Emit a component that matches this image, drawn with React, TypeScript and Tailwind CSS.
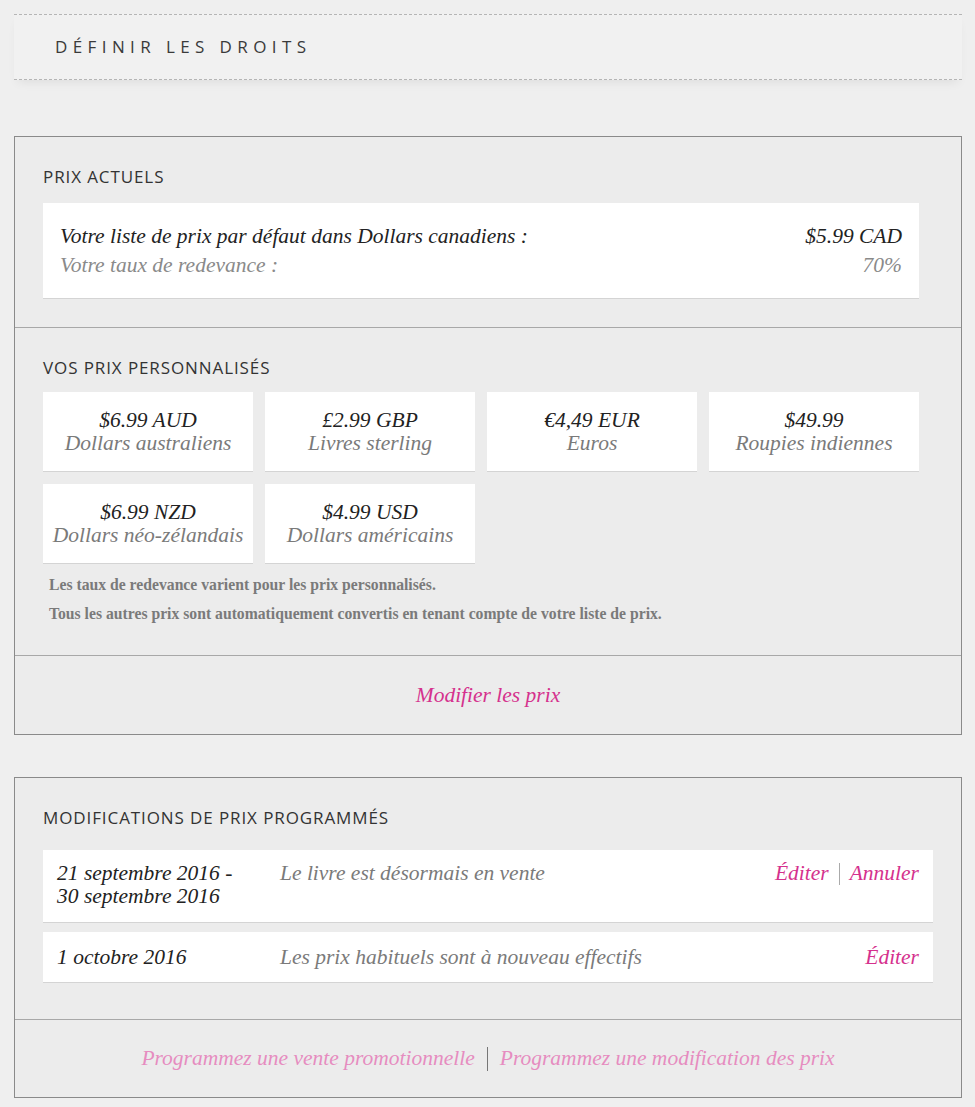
const serif = "font-['Liberation_Serif',Georgia,serif] italic"
const sans = "font-['Open_Sans','DejaVu_Sans',sans-serif]"

function SectionTitle({ children }: { children: React.ReactNode }) {
  return <h2 className={`${sans} text-[17px] leading-none text-[#333] tracking-[0.9px]`}>{children}</h2>
}

function PriceCard({ price, name }: { price: string; name: string }) {
  return (
    <div className="bg-white h-[79px] flex flex-col items-center justify-center shadow-[0_1px_0_#d4d4d4]">
      <div className={`${serif} text-[21.5px] leading-[23px] text-[#222]`}>{price}</div>
      <div className={`${serif} text-[21.5px] leading-[23px] text-[#7a7a7a]`}>{name}</div>
    </div>
  )
}

export default function App() {
  const prices = [
    { price: "$6.99 AUD", name: "Dollars australiens" },
    { price: "£2.99 GBP", name: "Livres sterling" },
    { price: "€4,49 EUR", name: "Euros" },
    { price: "$49.99", name: "Roupies indiennes" },
    { price: "$6.99 NZD", name: "Dollars néo-zélandais" },
    { price: "$4.99 USD", name: "Dollars américains" },
  ]

  return (
    <div className="min-h-screen bg-[#efefef] pt-[14px] pb-[8px]">
      {/* Header */}
      <div className="ml-[14px] mr-[13px]">
        <div className="h-[66px] border-y border-dashed border-[#b5b5b5] bg-[#f1f1f1] shadow-[0_6px_10px_-4px_rgba(0,0,0,0.08)] flex items-center pl-[41px]">
          <h1 className={`${sans} text-[17px] tracking-[5.4px] text-[#3a3a3a]`}>DÉFINIR LES DROITS</h1>
        </div>
      </div>

      {/* Prix */}
      <div className="mt-[56px] ml-[14px] mr-[13px] border border-[#8a8a8a] bg-[#ececec]">
        <div className="pt-[31px] pb-[29px] pl-[28px] pr-[42px] border-b border-[#a8a8a8]">
          <SectionTitle>PRIX ACTUELS</SectionTitle>
          <div className="mt-[18px] bg-white h-[95px] px-[17px] flex flex-col justify-center shadow-[0_1px_0_#d4d4d4]">
            <div className="flex justify-between">
              <span className={`${serif} text-[21.5px] leading-[29px] text-[#222]`}>Votre liste de prix par défaut dans Dollars canadiens :</span>
              <span className={`${serif} text-[21.5px] leading-[29px] text-[#222]`}>$5.99 CAD</span>
            </div>
            <div className="flex justify-between">
              <span className={`${serif} text-[21.5px] leading-[29px] text-[#8a8a8a]`}>Votre taux de redevance :</span>
              <span className={`${serif} text-[21.5px] leading-[29px] text-[#8a8a8a]`}>70%</span>
            </div>
          </div>
        </div>

        <div className="pt-[31px] pb-[32px] pl-[28px] pr-[42px] border-b border-[#a8a8a8]">
          <SectionTitle>VOS PRIX PERSONNALISÉS</SectionTitle>
          <div className="mt-[16px] grid grid-cols-4 gap-x-[12px] gap-y-[13px]">
            {prices.map((p) => (
              <PriceCard key={p.price} price={p.price} name={p.name} />
            ))}
          </div>
          <div className="mt-[13px] pl-[6px] font-['Liberation_Serif',Georgia,serif] font-bold text-[15.7px] text-[#7a7a7a] leading-[18px]">
            <p>Les taux de redevance varient pour les prix personnalisés.</p>
            <p className="mt-[11px]">Tous les autres prix sont automatiquement convertis en tenant compte de votre liste de prix.</p>
          </div>
        </div>

        <div className="h-[78px] flex items-center justify-center">
          <a className={`${serif} text-[21.5px] text-[#d5318d]`}>Modifier les prix</a>
        </div>
      </div>

      {/* Modifications programmées */}
      <div className="mt-[42px] ml-[14px] mr-[13px] border border-[#8a8a8a] bg-[#ececec]">
        <div className="pt-[31px] pb-[37px] pl-[28px] pr-[28px] border-b border-[#a8a8a8]">
          <SectionTitle>MODIFICATIONS DE PRIX PROGRAMMÉS</SectionTitle>
          <div className="mt-[24px] flex flex-col gap-[10px]">
            <div className="bg-white h-[72px] pl-[14px] pr-[14px] pt-[12px] flex items-start shadow-[0_1px_0_#d4d4d4]">
              <div className={`${serif} w-[223px] text-[21.5px] leading-[23px] text-[#222]`}>
                21 septembre 2016 -<br />30 septembre 2016
              </div>
              <div className={`${serif} flex-1 text-[21.5px] leading-[23px] text-[#7a7a7a]`}>Le livre est désormais en vente</div>
              <div className={`${serif} text-[21.5px] leading-[23px] text-[#d5318d] flex items-center`}>
                <a>Éditer</a>
                <span className="mx-[10px] inline-block w-px h-[22px] bg-[#aaa]" />
                <a>Annuler</a>
              </div>
            </div>
            <div className="bg-white h-[50px] pl-[14px] pr-[14px] flex items-center shadow-[0_1px_0_#d4d4d4]">
              <div className={`${serif} w-[223px] text-[21.5px] leading-[23px] text-[#222]`}>1 octobre 2016</div>
              <div className={`${serif} flex-1 text-[21.5px] leading-[23px] text-[#7a7a7a]`}>Les prix habituels sont à nouveau effectifs</div>
              <a className={`${serif} text-[21.5px] leading-[23px] text-[#d5318d]`}>Éditer</a>
            </div>
          </div>
        </div>
        <div className="h-[77px] flex items-center justify-center">
          <a className={`${serif} text-[21.5px] text-[#e68cc0]`}>Programmez une vente promotionnelle</a>
          <span className="mx-[12px] inline-block w-px h-[24px] bg-[#777]" />
          <a className={`${serif} text-[21.5px] text-[#e68cc0]`}>Programmez une modification des prix</a>
        </div>
      </div>
    </div>
  )
}
